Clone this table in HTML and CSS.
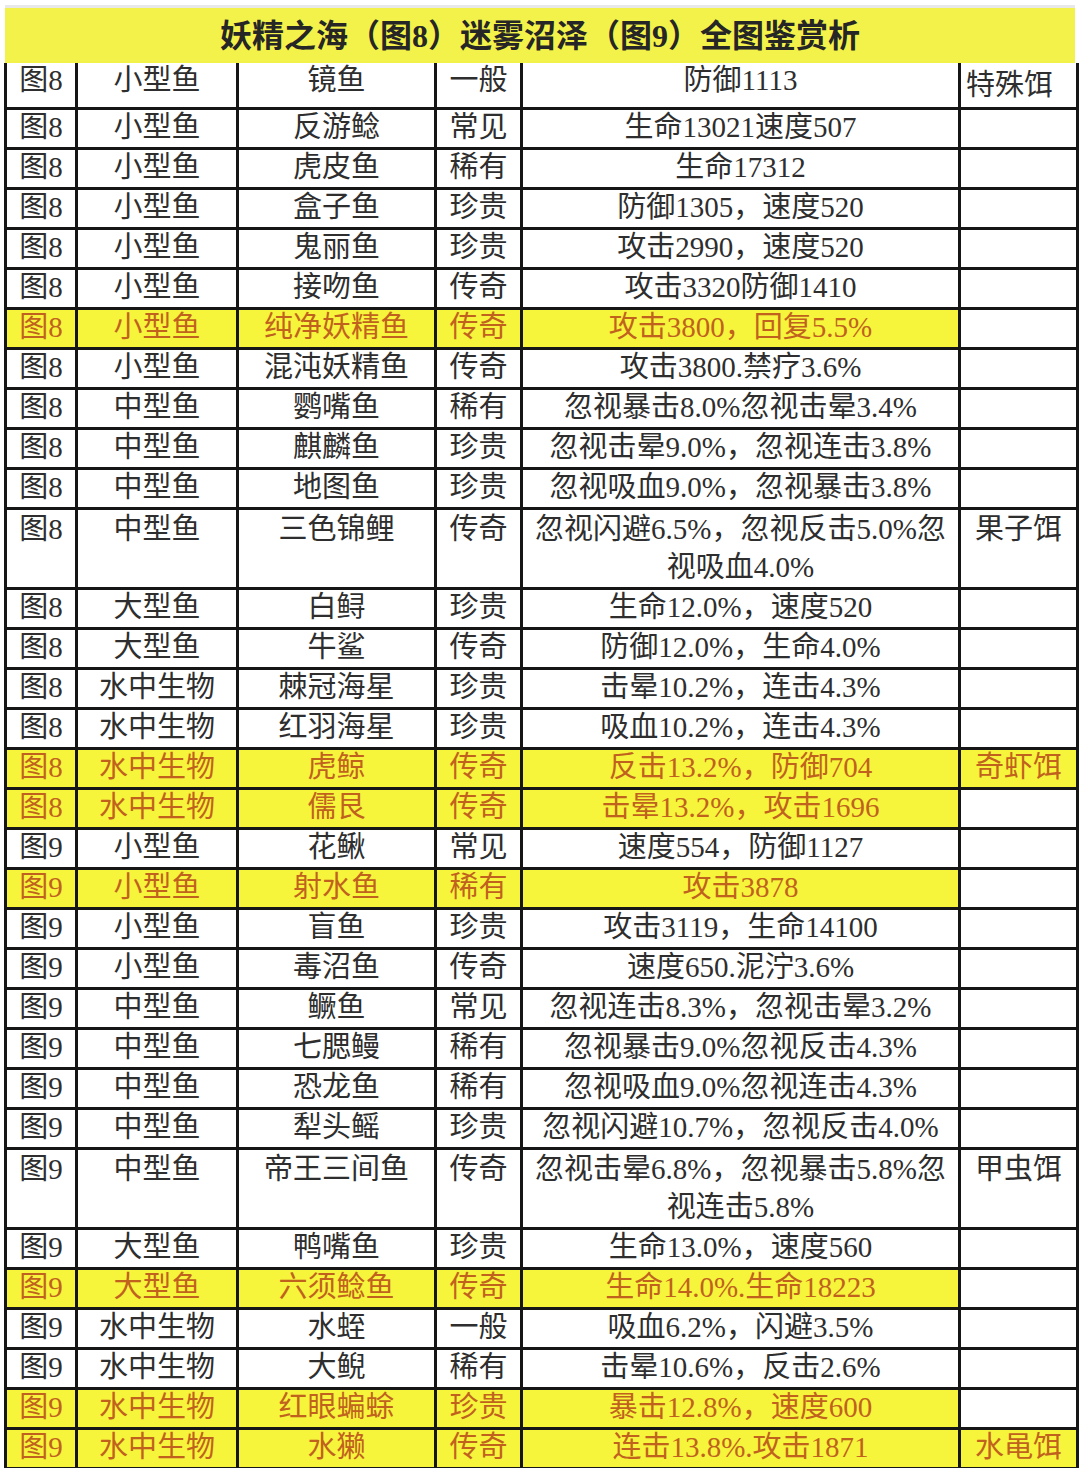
FILE: index.html
```html
<!DOCTYPE html>
<html lang="zh-CN">
<head>
<meta charset="utf-8">
<title>妖精之海（图8）迷雾沼泽（图9）全图鉴赏析</title>
<link rel="stylesheet" href="styles.css">
</head>
<body>
<div class="sheet">
  <div class="title">妖精之海（图8）迷雾沼泽（图9）全图鉴赏析</div>
  <table class="grid">
    <colgroup>
      <col class="c-map"><col class="c-type"><col class="c-name"><col class="c-rare"><col class="c-stat"><col class="c-bait">
    </colgroup>
    <tbody>
      <tr class="first"><td>图8</td><td>小型鱼</td><td>镜鱼</td><td>一般</td><td>防御1113</td><td class="bait-first">特殊饵</td></tr>
      <tr><td>图8</td><td>小型鱼</td><td>反游鲶</td><td>常见</td><td>生命13021速度507</td><td></td></tr>
      <tr><td>图8</td><td>小型鱼</td><td>虎皮鱼</td><td>稀有</td><td>生命17312</td><td></td></tr>
      <tr><td>图8</td><td>小型鱼</td><td>盒子鱼</td><td>珍贵</td><td>防御1305，速度520</td><td></td></tr>
      <tr><td>图8</td><td>小型鱼</td><td>鬼丽鱼</td><td>珍贵</td><td>攻击2990，速度520</td><td></td></tr>
      <tr><td>图8</td><td>小型鱼</td><td>接吻鱼</td><td>传奇</td><td>攻击3320防御1410</td><td></td></tr>
      <tr class="hl"><td>图8</td><td>小型鱼</td><td>纯净妖精鱼</td><td>传奇</td><td>攻击3800，回复5.5%</td><td class="plain"></td></tr>
      <tr><td>图8</td><td>小型鱼</td><td>混沌妖精鱼</td><td>传奇</td><td>攻击3800.禁疗3.6%</td><td></td></tr>
      <tr><td>图8</td><td>中型鱼</td><td>鹦嘴鱼</td><td>稀有</td><td>忽视暴击8.0%忽视击晕3.4%</td><td></td></tr>
      <tr><td>图8</td><td>中型鱼</td><td>麒麟鱼</td><td>珍贵</td><td>忽视击晕9.0%，忽视连击3.8%</td><td></td></tr>
      <tr><td>图8</td><td>中型鱼</td><td>地图鱼</td><td>珍贵</td><td>忽视吸血9.0%，忽视暴击3.8%</td><td></td></tr>
      <tr class="tall"><td>图8</td><td>中型鱼</td><td>三色锦鲤</td><td>传奇</td><td>忽视闪避6.5%，忽视反击5.0%忽<br>视吸血4.0%</td><td>果子饵</td></tr>
      <tr><td>图8</td><td>大型鱼</td><td>白鲟</td><td>珍贵</td><td>生命12.0%，速度520</td><td></td></tr>
      <tr><td>图8</td><td>大型鱼</td><td>牛鲨</td><td>传奇</td><td>防御12.0%，生命4.0%</td><td></td></tr>
      <tr><td>图8</td><td>水中生物</td><td>棘冠海星</td><td>珍贵</td><td>击晕10.2%，连击4.3%</td><td></td></tr>
      <tr><td>图8</td><td>水中生物</td><td>红羽海星</td><td>珍贵</td><td>吸血10.2%，连击4.3%</td><td></td></tr>
      <tr class="hl"><td>图8</td><td>水中生物</td><td>虎鲸</td><td>传奇</td><td>反击13.2%，防御704</td><td>奇虾饵</td></tr>
      <tr class="hl"><td>图8</td><td>水中生物</td><td>儒艮</td><td>传奇</td><td>击晕13.2%，攻击1696</td><td class="plain"></td></tr>
      <tr><td>图9</td><td>小型鱼</td><td>花鳅</td><td>常见</td><td>速度554，防御1127</td><td></td></tr>
      <tr class="hl"><td>图9</td><td>小型鱼</td><td>射水鱼</td><td>稀有</td><td>攻击3878</td><td class="plain"></td></tr>
      <tr><td>图9</td><td>小型鱼</td><td>盲鱼</td><td>珍贵</td><td>攻击3119，生命14100</td><td></td></tr>
      <tr><td>图9</td><td>小型鱼</td><td>毒沼鱼</td><td>传奇</td><td>速度650.泥泞3.6%</td><td></td></tr>
      <tr><td>图9</td><td>中型鱼</td><td>鳜鱼</td><td>常见</td><td>忽视连击8.3%，忽视击晕3.2%</td><td></td></tr>
      <tr><td>图9</td><td>中型鱼</td><td>七腮鳗</td><td>稀有</td><td>忽视暴击9.0%忽视反击4.3%</td><td></td></tr>
      <tr><td>图9</td><td>中型鱼</td><td>恐龙鱼</td><td>稀有</td><td>忽视吸血9.0%忽视连击4.3%</td><td></td></tr>
      <tr><td>图9</td><td>中型鱼</td><td>犁头鳐</td><td>珍贵</td><td>忽视闪避10.7%，忽视反击4.0%</td><td></td></tr>
      <tr class="tall"><td>图9</td><td>中型鱼</td><td>帝王三间鱼</td><td>传奇</td><td>忽视击晕6.8%，忽视暴击5.8%忽<br>视连击5.8%</td><td>甲虫饵</td></tr>
      <tr><td>图9</td><td>大型鱼</td><td>鸭嘴鱼</td><td>珍贵</td><td>生命13.0%，速度560</td><td></td></tr>
      <tr class="hl"><td>图9</td><td>大型鱼</td><td>六须鲶鱼</td><td>传奇</td><td>生命14.0%.生命18223</td><td class="plain"></td></tr>
      <tr><td>图9</td><td>水中生物</td><td>水蛭</td><td>一般</td><td>吸血6.2%，闪避3.5%</td><td></td></tr>
      <tr><td>图9</td><td>水中生物</td><td>大鲵</td><td>稀有</td><td>击晕10.6%，反击2.6%</td><td></td></tr>
      <tr class="hl"><td>图9</td><td>水中生物</td><td>红眼蝙蜍</td><td>珍贵</td><td>暴击12.8%，速度600</td><td class="plain"></td></tr>
      <tr class="hl"><td>图9</td><td>水中生物</td><td>水獭</td><td>传奇</td><td>连击13.8%.攻击1871</td><td>水黾饵</td></tr>
    </tbody>
  </table>
</div>
</body>
</html>
```
FILE: styles.css
```css
html, body {
  margin: 0;
  padding: 0;
  background: #ffffff;
}

body {
  font-family: "Liberation Serif", "Noto Sans CJK SC", serif;
  color: #2e2e2e;
}

.sheet {
  padding: 8px 4px 0 4px;
  width: 1072px;
}

.title {
  height: 55px;
  box-sizing: border-box;
  padding-bottom: 5px;
  background: #f3f24a;
  margin-left: 1px;
  margin-right: 1px;
  display: flex;
  align-items: center;
  justify-content: center;
  font-family: "Liberation Serif", "Noto Sans CJK SC", sans-serif;
  font-weight: 700;
  font-size: 32px;
  color: #262626;
  box-shadow: 0 -3px 0 #e8e8e8;
}

.grid {
  width: 1072px;
  table-layout: fixed;
  border-collapse: collapse;
}

.c-map { width: 71px; }
.c-type { width: 161px; }
.c-name { width: 198px; }
.c-rare { width: 86px; }
.c-stat { width: 438px; }
.c-bait { width: 118px; }

.grid td {
  border: 3px solid #161616;
  height: 37px;
  padding: 0;
  text-align: center;
  vertical-align: top;
  font-size: 29px;
  line-height: 34px;
  white-space: nowrap;
  overflow: hidden;
}

.grid tr.first td {
  border-top: none;
  height: 41px;
  line-height: 34px;
}

.grid tr.first td.bait-first {
  line-height: 44px;
  text-align: left;
  padding-left: 5px;
}

.grid tr.tall td {
  height: 77px;
  line-height: 38px;
}

.grid tr.hl td {
  background: #f7f43c;
  color: #c0621e;
}

.grid tr.hl td.plain {
  background: #ffffff;
}
```
